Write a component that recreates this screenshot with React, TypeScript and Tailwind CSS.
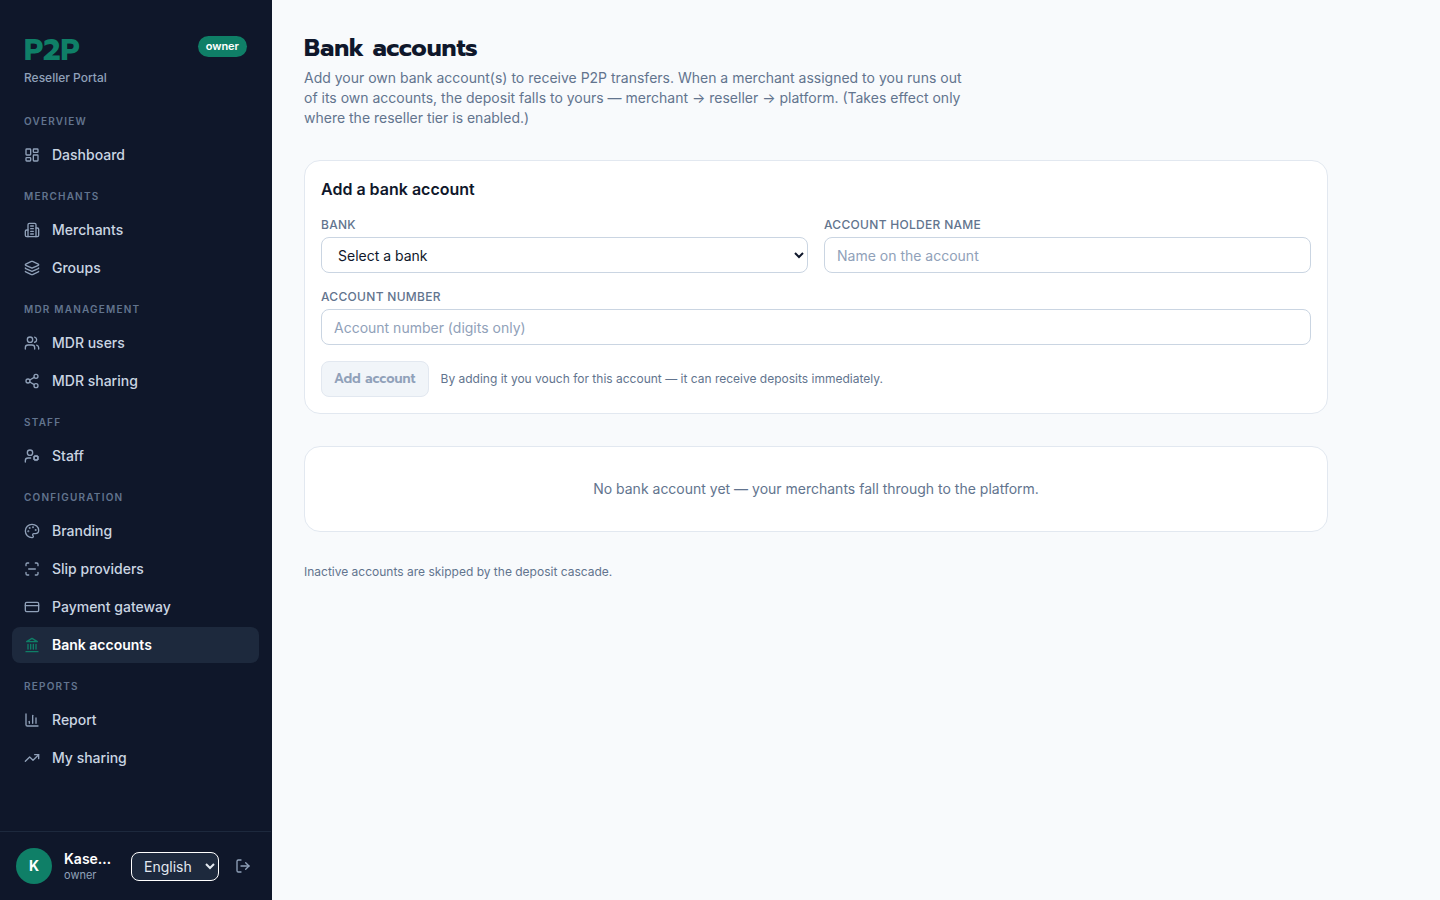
import React from "react";
import {
  LayoutDashboard, Layers, Users, Share2, UserCog, Palette, ScanLine,
  CreditCard, ChartColumn, TrendingUp, LogOut,
} from "lucide-react";

type IconProps = { size?: number; className?: string };
type NavItem = { label: string; icon: React.ComponentType<IconProps>; active?: boolean };
type NavGroup = { title: string; items: NavItem[] };

function StrokeIcon({ size = 16, className, children }: IconProps & { children: React.ReactNode }) {
  return (
    <svg
      width={size}
      height={size}
      viewBox="0 0 24 24"
      fill="none"
      stroke="currentColor"
      strokeWidth={2}
      strokeLinecap="round"
      strokeLinejoin="round"
      aria-hidden="true"
      className={className}
    >
      {children}
    </svg>
  );
}

function BuildingIcon(props: IconProps) {
  return (
    <StrokeIcon {...props}>
      <path d="M6 22V4a2 2 0 0 1 2-2h8a2 2 0 0 1 2 2v18Z" />
      <path d="M6 12H4a2 2 0 0 0-2 2v6a2 2 0 0 0 2 2h2" />
      <path d="M18 9h2a2 2 0 0 1 2 2v9a2 2 0 0 1-2 2h-2" />
      <path d="M10 6h4M10 10h4M10 14h4M10 18h4" />
    </StrokeIcon>
  );
}

function BankIcon(props: IconProps) {
  return (
    <StrokeIcon {...props}>
      <path d="M3 22h18M6 18v-7M10 18v-7M14 18v-7M18 18v-7" />
      <path d="M12 2l8 5H4z" />
    </StrokeIcon>
  );
}

const groups: NavGroup[] = [
  { title: "Overview", items: [{ label: "Dashboard", icon: LayoutDashboard }] },
  {
    title: "Merchants",
    items: [
      { label: "Merchants", icon: BuildingIcon },
      { label: "Groups", icon: Layers },
    ],
  },
  {
    title: "MDR management",
    items: [
      { label: "MDR users", icon: Users },
      { label: "MDR sharing", icon: Share2 },
    ],
  },
  { title: "Staff", items: [{ label: "Staff", icon: UserCog }] },
  {
    title: "Configuration",
    items: [
      { label: "Branding", icon: Palette },
      { label: "Slip providers", icon: ScanLine },
      { label: "Payment gateway", icon: CreditCard },
      { label: "Bank accounts", icon: BankIcon, active: true },
    ],
  },
  {
    title: "Reports",
    items: [
      { label: "Report", icon: ChartColumn },
      { label: "My sharing", icon: TrendingUp },
    ],
  },
];

function Sidebar() {
  return (
    <aside className="sticky top-0 flex h-screen w-68 shrink-0 flex-col border-r border-[#0f172a] bg-[#0f172a]">
      <div className="flex items-start justify-between px-6 pt-9 pb-4">
        <div>
          <div className="font-['Prompt','Open_Sans',sans-serif] text-[30px] leading-7 font-bold text-[#0f7f67]">P2P</div>
          <div className="mt-1 text-xs leading-5 font-medium text-slate-400">Reseller Portal</div>
        </div>
        <span className="rounded-full bg-[#0f7f67] px-2 text-[11px] leading-[21px] font-semibold text-white">owner</span>
      </div>
      <nav className="flex flex-1 flex-col gap-4 overflow-hidden px-3 pt-2.5">
        {groups.map((group) => (
          <div key={group.title}>
            <h2 className="px-3 pb-2 text-[10px] leading-[15px] font-semibold tracking-[1.2px] text-slate-500 uppercase">
              {group.title}
            </h2>
            <ul className="flex flex-col gap-0.5">
              {group.items.map(({ label, icon: Icon, active }) => (
                <li key={label}>
                  <a
                    href="#"
                    aria-current={active ? "page" : undefined}
                    className={
                      active
                        ? "flex h-9 items-center gap-3 rounded-lg bg-slate-800 px-3 text-sm font-semibold text-white"
                        : "flex h-9 items-center gap-3 rounded-lg px-3 text-sm font-medium text-slate-300"
                    }
                  >
                    <Icon size={16} className={active ? "text-[#0f7f67]" : "text-slate-400"} />
                    {label}
                  </a>
                </li>
              ))}
            </ul>
          </div>
        ))}
      </nav>
      <div className="flex items-center gap-3 border-t border-slate-800 p-4">
        <div className="flex size-9 shrink-0 items-center justify-center rounded-full bg-[#0f7f67] text-sm font-bold text-white">K</div>
        <div className="min-w-0 flex-1">
          <div className="truncate text-sm leading-[18px] font-semibold text-white">Kasemsan</div>
          <div className="text-[11px] leading-[14px] text-slate-400">owner</div>
        </div>
        <select
          aria-label="Language"
          className="ml-1 h-[29px] w-22 rounded-lg border border-white bg-slate-800 px-2 text-sm text-slate-200"
        >
          <option>English</option>
          <option>ไทย</option>
        </select>
        <button type="button" aria-label="Log out" className="p-1 text-slate-400">
          <LogOut size={16} />
        </button>
      </div>
    </aside>
  );
}

const labelClass = "text-xs leading-4 font-medium tracking-[0.3px] text-slate-500 uppercase";
const fieldClass =
  "h-9 w-full rounded-lg border border-slate-300 bg-white px-3 text-sm text-slate-900 placeholder:text-slate-400";

export default function App() {
  return (
    <div className="flex min-h-screen bg-slate-50 font-['Inter',sans-serif] text-slate-900">
      <Sidebar />
      <main className="flex max-w-[1088px] min-w-0 flex-1 flex-col gap-8 p-8">
        <header>
          <h1 className="font-['Prompt','Open_Sans',sans-serif] text-2xl leading-8 font-bold text-slate-900">Bank accounts</h1>
          <p className="mt-1 max-w-2xl text-sm leading-5 text-slate-500">
            Add your own bank account(s) to receive P2P transfers. When a merchant assigned to you runs out of its own
            accounts, the deposit falls to yours — merchant → reseller → platform. (Takes effect only where the
            reseller tier is enabled.)
          </p>
        </header>
        <form className="flex flex-col gap-4 rounded-2xl border border-slate-200 bg-white p-4">
          <h2 className="text-base leading-6 font-semibold text-slate-900">Add a bank account</h2>
          <div className="grid grid-cols-2 gap-4">
            <div className="flex flex-col gap-1">
              <label htmlFor="bank" className={labelClass}>Bank</label>
              <select id="bank" className={fieldClass}>
                <option>Select a bank</option>
              </select>
            </div>
            <div className="flex flex-col gap-1">
              <label htmlFor="holder" className={labelClass}>Account holder name</label>
              <input id="holder" type="text" placeholder="Name on the account" className={fieldClass} />
            </div>
            <div className="col-span-2 flex flex-col gap-1">
              <label htmlFor="number" className={labelClass}>Account number</label>
              <input id="number" type="text" inputMode="numeric" placeholder="Account number (digits only)" className={fieldClass} />
            </div>
          </div>
          <div className="flex items-center gap-3">
            <button
              type="submit"
              disabled
              className="h-9 rounded-lg border border-slate-200 bg-slate-100 px-3 font-['Prompt','Open_Sans',sans-serif] text-[13px] font-semibold text-slate-400"
            >
              Add account
            </button>
            <p className="text-xs leading-4 text-slate-500">
              By adding it you vouch for this account — it can receive deposits immediately.
            </p>
          </div>
        </form>
        <section className="rounded-2xl border border-slate-200 bg-white px-4 py-8 text-center text-sm leading-5 text-slate-500">
          No bank account yet — your merchants fall through to the platform.
        </section>
        <p className="text-xs leading-4 text-slate-500">Inactive accounts are skipped by the deposit cascade.</p>
      </main>
    </div>
  );
}
